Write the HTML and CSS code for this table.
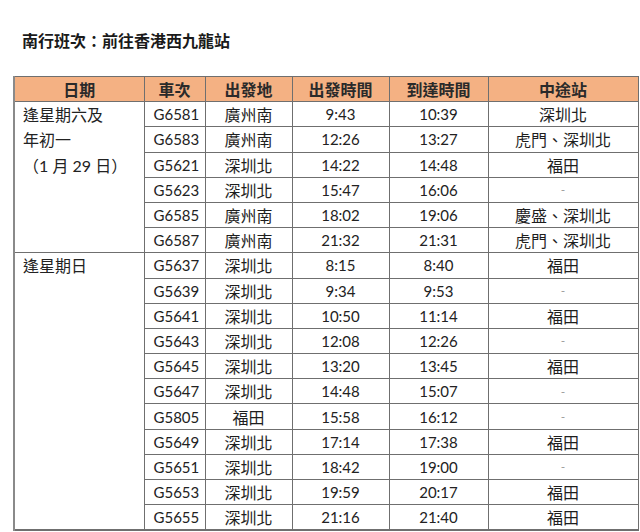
FILE: index.html
```html
<!DOCTYPE html>
<html lang="zh-Hant">
<head>
<meta charset="utf-8">
<title>南行班次</title>
<link rel="stylesheet" href="styles.css">
</head>
<body>
<div class="page">
  <h1 class="title">南行班次：前往香港西九龍站</h1>
  <table class="sched">
    <colgroup>
      <col class="c1"><col class="c2"><col class="c3"><col class="c4"><col class="c5"><col class="c6">
    </colgroup>
    <thead>
      <tr><th>日期</th><th>車次</th><th>出發地</th><th>出發時間</th><th>到達時間</th><th>中途站</th></tr>
    </thead>
    <tbody>
      <tr><td class="date" rowspan="6">逢星期六及<br>年初一<br>（1 月 29 日）</td><td class="no">G6581</td><td class="s">廣州南</td><td>9:43</td><td>10:39</td><td class="s">深圳北</td></tr>
      <tr><td class="no">G6583</td><td class="s">廣州南</td><td>12:26</td><td>13:27</td><td class="s">虎門、深圳北</td></tr>
      <tr><td class="no">G5621</td><td class="s">深圳北</td><td>14:22</td><td>14:48</td><td class="s">福田</td></tr>
      <tr><td class="no">G5623</td><td class="s">深圳北</td><td>15:47</td><td>16:06</td><td class="dash">-</td></tr>
      <tr><td class="no">G6585</td><td class="s">廣州南</td><td>18:02</td><td>19:06</td><td class="s">慶盛、深圳北</td></tr>
      <tr><td class="no">G6587</td><td class="s">廣州南</td><td>21:32</td><td>21:31</td><td class="s">虎門、深圳北</td></tr>
      <tr><td class="date" rowspan="11">逢星期日</td><td class="no">G5637</td><td class="s">深圳北</td><td>8:15</td><td>8:40</td><td class="s">福田</td></tr>
      <tr><td class="no">G5639</td><td class="s">深圳北</td><td>9:34</td><td>9:53</td><td class="dash">-</td></tr>
      <tr><td class="no">G5641</td><td class="s">深圳北</td><td>10:50</td><td>11:14</td><td class="s">福田</td></tr>
      <tr><td class="no">G5643</td><td class="s">深圳北</td><td>12:08</td><td>12:26</td><td class="dash">-</td></tr>
      <tr><td class="no">G5645</td><td class="s">深圳北</td><td>13:20</td><td>13:45</td><td class="s">福田</td></tr>
      <tr><td class="no">G5647</td><td class="s">深圳北</td><td>14:48</td><td>15:07</td><td class="dash">-</td></tr>
      <tr><td class="no">G5805</td><td class="s">福田</td><td>15:58</td><td>16:12</td><td class="dash">-</td></tr>
      <tr><td class="no">G5649</td><td class="s">深圳北</td><td>17:14</td><td>17:38</td><td class="s">福田</td></tr>
      <tr><td class="no">G5651</td><td class="s">深圳北</td><td>18:42</td><td>19:00</td><td class="dash">-</td></tr>
      <tr><td class="no">G5653</td><td class="s">深圳北</td><td>19:59</td><td>20:17</td><td class="s">福田</td></tr>
      <tr><td class="no">G5655</td><td class="s">深圳北</td><td>21:16</td><td>21:40</td><td class="s">福田</td></tr>
    </tbody>
  </table>
</div>
</body>
</html>
```
FILE: styles.css
```css
html, body {
  margin: 0;
  padding: 0;
  background: #ffffff;
}
.page {
  padding: 30px 0 0 13px;
  font-family: Lato, "Noto Sans CJK TC", sans-serif;
  color: #222222;
}
.title {
  margin: 0 0 26px 9px;
  font-size: 16px;
  line-height: 20px;
  font-weight: 700;
  font-family: "Noto Sans CJK TC", sans-serif;
  color: #1a1a1a;
}
.sched {
  border-collapse: collapse;
  table-layout: fixed;
  width: 624px;
  border-left: 2px solid #8a8a8a;
  border-right: 1px solid #6f6f6f;
  border-bottom: 2px solid #6f6f6f;
  border-top: 1px solid #7a7a7a;
}
.c1 { width: 130px; }
.c2 { width: 61px; }
.c3 { width: 87px; }
.c4 { width: 97px; }
.c5 { width: 99px; }
.c6 { width: 150px; }
.sched th, .sched td {
  border: 1px solid #6f6f6f;
  height: 25.2px;
  padding: 0;
  box-sizing: border-box;
  font-size: 15px;
  text-align: center;
  vertical-align: middle;
  white-space: nowrap;
}
.sched th {
  background: #f4b183;
  font-family: "Noto Sans CJK TC", sans-serif;
  font-weight: 700;
  color: #2a2a2a;
  font-size: 16px;
}
.sched td {
  font-weight: 400;
}
.sched td.s {
  font-family: "Noto Sans CJK TC", sans-serif;
  font-size: 16px;
  color: #1e1e1e;
}
.sched td.date {
  text-align: left;
  vertical-align: top;
  padding-left: 8px;
  font-size: 16px;
  line-height: 25.2px;
  border-left: 2px solid #8a8a8a;
}
.sched td.no {
  text-align: left;
  padding-left: 9px;
}
.sched td.dash {
  color: #9a9a9a;
  font-size: 12px;
}
```
